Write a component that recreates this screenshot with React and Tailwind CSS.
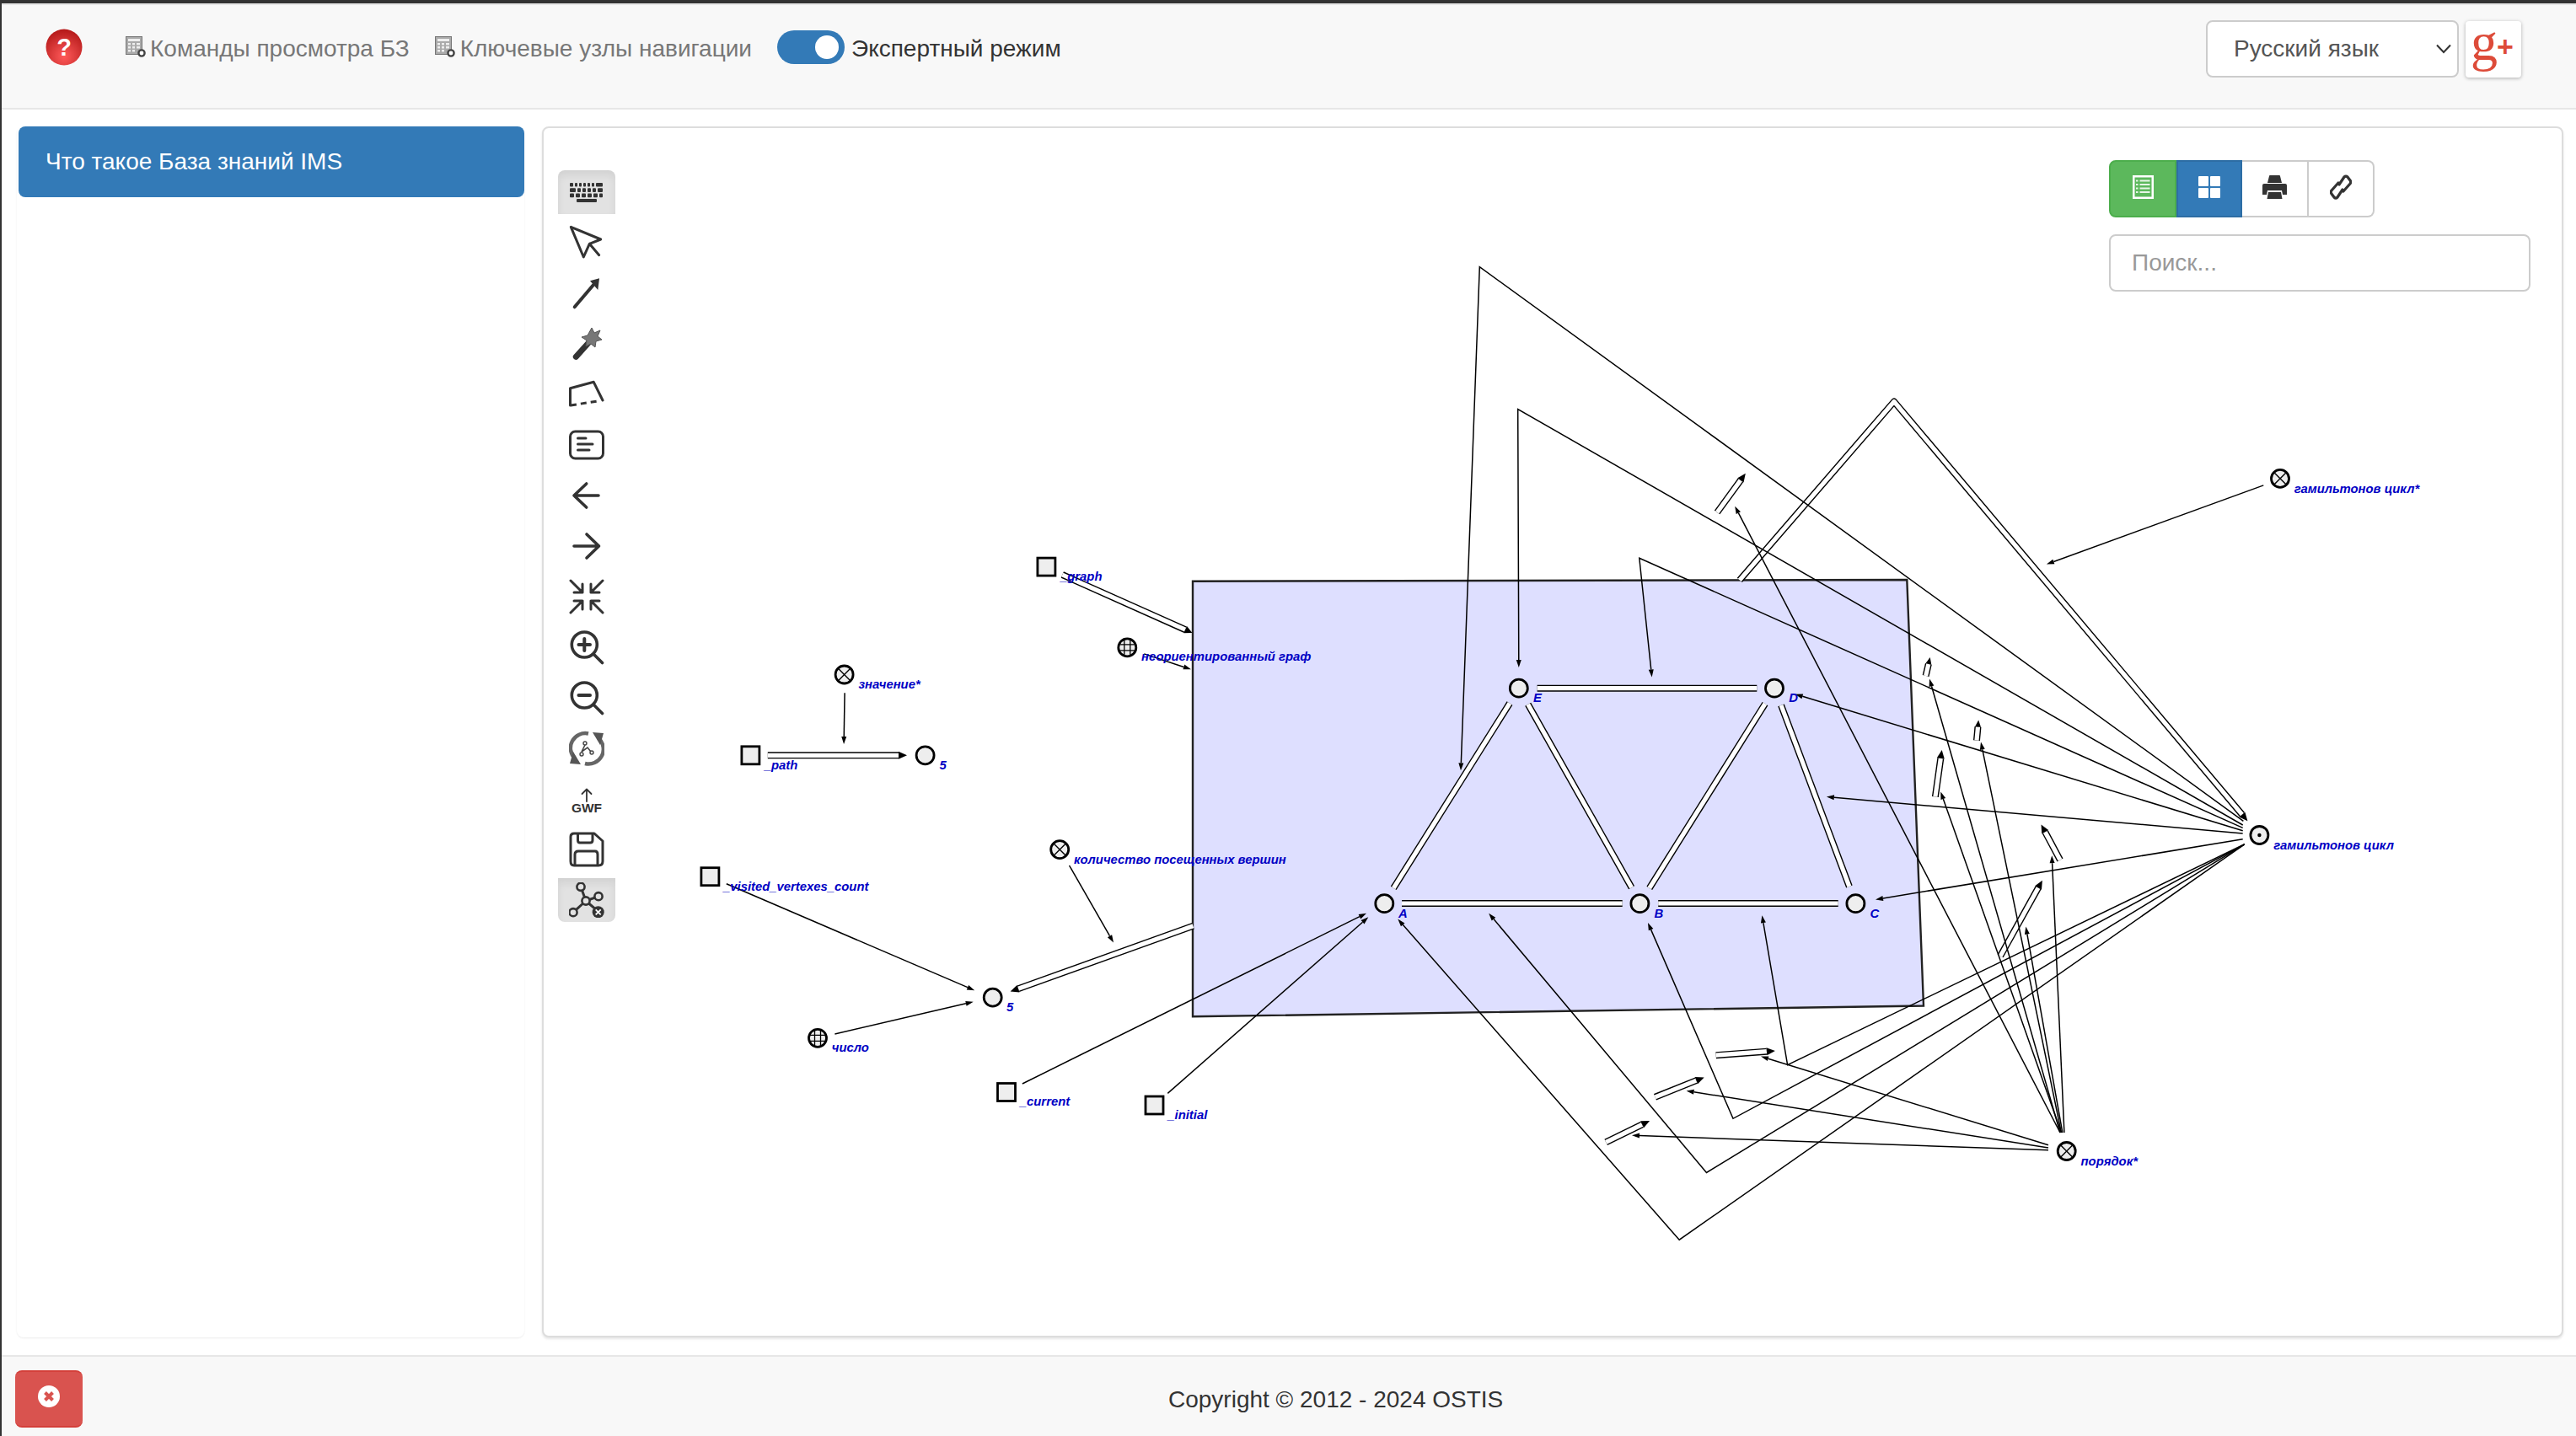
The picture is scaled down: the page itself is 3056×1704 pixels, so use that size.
import React from 'react';

const DARK = '#000';

function head(x1, y1, x2, y2, len, w) {
  const d = Math.hypot(x2 - x1, y2 - y1);
  const ux = (x2 - x1) / d, uy = (y2 - y1) / d;
  const bx = x2 - ux * len, by = y2 - uy * len;
  return {
    pts: `${x2},${y2} ${bx - uy * w / 2},${by + ux * w / 2} ${bx + uy * w / 2},${by - ux * w / 2}`,
    bx, by,
  };
}

function Thin({ p }) {
  const n = p.length;
  const h = head(p[n - 2][0], p[n - 2][1], p[n - 1][0], p[n - 1][1], 9, 6);
  const pts = p.slice(0, -1).map((q) => q.join(',')).join(' ') + ` ${h.bx},${h.by}`;
  return (
    <g>
      <polyline points={pts} fill="none" stroke={DARK} strokeWidth="1.5" />
      <polygon points={h.pts} fill={DARK} />
    </g>
  );
}

function Dbl({ p, arrow = true, len = 10, w = 9 }) {
  const n = p.length;
  let pts = p.map((q) => q.join(',')).join(' ');
  let h = null;
  if (arrow) {
    h = head(p[n - 2][0], p[n - 2][1], p[n - 1][0], p[n - 1][1], len, w);
    pts = p.slice(0, -1).map((q) => q.join(',')).join(' ') + ` ${h.bx},${h.by}`;
  }
  return (
    <g>
      <polyline points={pts} fill="none" stroke={DARK} strokeWidth="8" strokeLinejoin="round" />
      <polyline points={pts} fill="none" stroke="#fff" strokeWidth="5.2" strokeLinejoin="round" />
      {h && <polygon points={h.pts} fill={DARK} />}
    </g>
  );
}

function Square({ x, y }) {
  return <rect x={x - 10.5} y={y - 10.5} width="21" height="21" fill="#eee" stroke="#000" strokeWidth="2.8" />;
}
function Circle({ x, y }) {
  return <circle cx={x} cy={y} r="10.5" fill="#eee" stroke="#000" strokeWidth="2.8" />;
}
function Cross({ x, y }) {
  return (
    <g>
      <circle cx={x} cy={y} r="10.5" fill="#eee" stroke="#000" strokeWidth="2.8" />
      <path d={`M${x - 7.4} ${y - 7.4}L${x + 7.4} ${y + 7.4}M${x + 7.4} ${y - 7.4}L${x - 7.4} ${y + 7.4}`} stroke="#000" strokeWidth="1.4" />
    </g>
  );
}
function Globe({ x, y }) {
  return (
    <g>
      <circle cx={x} cy={y} r="10.5" fill="#eee" stroke="#000" strokeWidth="2.8" />
      <path d={`M${x - 3.5} ${y - 10}V${y + 10}M${x + 3.5} ${y - 10}V${y + 10}M${x - 10} ${y - 3.5}H${x + 10}M${x - 10} ${y + 3.5}H${x + 10}`} stroke="#000" strokeWidth="1.3" />
    </g>
  );
}
function Dot({ x, y }) {
  return (
    <g>
      <circle cx={x} cy={y} r="10.5" fill="#eee" stroke="#000" strokeWidth="2.8" />
      <circle cx={x} cy={y} r="2.2" fill="#000" />
    </g>
  );
}

const labels = [
  ['_graph', 1258, 688.6], ['неориентированный граф', 1354, 784.4], ['значение*', 1018.5, 816.5],
  ['_path', 906.7, 912.8], ['5', 1114.4, 912.8], ['_visited_vertexes_count', 858, 1056.7],
  ['количество посещенных вершин', 1274, 1025], ['5', 1194, 1199.7], ['число', 986.8, 1247.8],
  ['_current', 1209.8, 1312], ['_initial', 1385.3, 1328], ['E', 1819, 832.8], ['D', 2122.2, 832.8],
  ['A', 1658.9, 1089.4], ['B', 1962.6, 1089.4], ['C', 2218.6, 1089.4],
  ['гамильтонов цикл*', 2721.8, 585], ['гамильтонов цикл', 2697.2, 1007.8], ['порядок*', 2468.5, 1382.8],
];

function Graph() {
  return (
    <svg className="absolute left-0 top-0 w-[2394px] h-[1433px] pointer-events-none" viewBox="645 152 2394 1433">
      <polygon points="1415,689.8 2262.3,688 2282,1193.5 1415,1206.3" fill="#dedfff" stroke="#222" strokeWidth="2.4" />
      {/* edges inside the contour */}
      <Dbl arrow={false} p={[[1823.6, 816.7], [2084.3, 816.7]]} />
      <Dbl arrow={false} p={[[1663, 1072], [1924.7, 1072]]} />
      <Dbl arrow={false} p={[[1967.2, 1072], [2180.7, 1072]]} />
      <Dbl arrow={false} p={[[1653.2, 1053.8], [1791, 834.5]]} />
      <Dbl arrow={false} p={[[1812.7, 835.7], [1935.6, 1053.2]]} />
      <Dbl arrow={false} p={[[1956.8, 1053.8], [2094, 835]]} />
      <Dbl arrow={false} p={[[2113, 836.8], [2193.9, 1052]]} />
      {/* double arrows */}
      <Dbl p={[[1260.3, 682], [1414.4, 750.9]]} len={9} />
      <Dbl p={[[910.8, 896.3], [1076, 896.3]]} />
      <Dbl p={[[1415.4, 1098.7], [1198.6, 1176.6]]} />
      <Dbl p={[[2063.8, 688.4], [2247, 476.5], [2666.4, 974.3]]} />
      <Dbl p={[[2037.1, 608], [2070.8, 561.8]]} />
      <Dbl p={[[2284.6, 802], [2289.7, 780.1]]} len={8} w={7} />
      <Dbl p={[[2345, 878.6], [2347.2, 854.5]]} len={8} w={7} />
      <Dbl p={[[2295.9, 945.5], [2303.7, 890]]} />
      <Dbl p={[[2444, 1020.5], [2421.5, 978.4]]} />
      <Dbl p={[[2373.1, 1134.4], [2422.9, 1044.7]]} />
      <Dbl p={[[2035.7, 1252.2], [2105.9, 1246.9]]} />
      <Dbl p={[[1963.5, 1301.8], [2021.7, 1278.4]]} />
      <Dbl p={[[1905.2, 1355.4], [1957.1, 1329.9]]} />
      {/* thin arrows */}
      <Thin p={[[2685.3, 575.9], [2427.9, 669.6]]} />
      <Thin p={[[1357.3, 775.9], [1412.9, 794.3]]} />
      <Thin p={[[1002.1, 822.2], [1001.1, 883]]} />
      <Thin p={[[861.8, 1048.7], [1156.2, 1175.2]]} />
      <Thin p={[[990.4, 1227], [1154.7, 1188.8]]} />
      <Thin p={[[1268.5, 1027], [1321, 1118.5]]} />
      <Thin p={[[1212.9, 1286], [1621, 1083.7]]} />
      <Thin p={[[1385.3, 1297.4], [1623.3, 1088.3]]} />
      <Thin p={[[2661.4, 974.3], [1755.3, 316.7], [1733, 914.3]]} />
      <Thin p={[[2660.7, 979], [1800.7, 485.5], [1801.8, 792]]} />
      <Thin p={[[2660.7, 982.4], [1944.8, 662.3], [1959.7, 803.5]]} />
      <Thin p={[[2660.7, 985.7], [2129.7, 823.7]]} />
      <Thin p={[[2660.7, 989], [2166.9, 945.5]]} />
      <Thin p={[[2660.7, 995.8], [2225, 1067.4]]} />
      <Thin p={[[2662.8, 1001.8], [2120.6, 1263.6], [2090.4, 1086.2]]} />
      <Thin p={[[2662.8, 1001.8], [2056, 1327.3], [1955, 1094.9]]} />
      <Thin p={[[2662.8, 1001.8], [2024.5, 1391.5], [1766.2, 1083.7]]} />
      <Thin p={[[2662.8, 1001.8], [1992.2, 1471.2], [1658.3, 1090.6]]} />
      <Thin p={[[2444, 1344], [2058.2, 600.7]]} />
      <Thin p={[[2444, 1344], [2289, 805.6]]} />
      <Thin p={[[2445.4, 1344], [2350, 880.6]]} />
      <Thin p={[[2445.4, 1344], [2302.3, 939.5]]} />
      <Thin p={[[2448.9, 1344], [2434.2, 1015.2]]} />
      <Thin p={[[2446.8, 1344], [2403.3, 1099.6]]} />
      <Thin p={[[2430, 1358.7], [2089, 1253.6]]} />
      <Thin p={[[2430, 1362], [2000.6, 1294.4]]} />
      <Thin p={[[2430, 1364.8], [1936, 1347.3]]} />
      {/* nodes */}
      <Square x={1241.4} y={672.6} />
      <Square x={890.4} y={896.3} />
      <Square x={842.4} y={1040.2} />
      <Square x={1194} y={1296} />
      <Square x={1369.5} y={1311.5} />
      <Globe x={1337.3} y={768.4} />
      <Globe x={970} y={1231.8} />
      <Cross x={1001.6} y={800.5} />
      <Cross x={1257.2} y={1008.1} />
      <Cross x={2705} y={567.9} />
      <Cross x={2451.7} y={1366} />
      <Dot x={2680.4} y={991} />
      <Circle x={1097.6} y={896.3} />
      <Circle x={1177.7} y={1183.6} />
      <Circle x={1801.8} y={816.7} />
      <Circle x={2105} y={816.7} />
      <Circle x={1642.3} y={1072.2} />
      <Circle x={1945.4} y={1072.2} />
      <Circle x={2201.4} y={1072.2} />
      {labels.map(([t, x, y], i) => (
        <text key={i} x={x} y={y} fontFamily="Liberation Sans, sans-serif" fontSize="14.85" fontWeight="700" fontStyle="italic" fill="#0000c4">
          {t}
        </text>
      ))}
    </svg>
  );
}

const S = { fill: 'none', stroke: '#333', strokeWidth: 3, strokeLinecap: 'round', strokeLinejoin: 'round' };
function Ic({ children }) {
  return <svg width="42" height="42" viewBox="-1 -1 42 42">{children}</svg>;
}

const keyRows = [
  [[1, 4], [7, 3], [12, 3], [17, 3], [22, 3], [27, 3], [32, 8]],
  [[1, 7], [10, 4], [16, 4], [22, 4], [28, 4], [34, 6]],
  [[1, 5], [8, 5], [15, 5], [22, 5], [29, 5], [36, 4]],
];

const tools = [
  <Ic>
    {keyRows.map((r, i) => r.map(([x, w], j) => <rect key={`${i}${j}`} x={x - 1} y={9 + i * 6.3} width={w} height="4.6" rx="1" fill="#333" />))}
    <rect x="8" y="28" width="24" height="4" rx="1" fill="#333" />
  </Ic>,
  <Ic><path {...S} d="M1.3 1.3L36.7 16L23.3 21.3L16.3 37ZM23.3 21.3L34.7 34.7" /></Ic>,
  <Ic>
    <path {...S} strokeWidth="4" d="M5.7 36.3L28 10" />
    <polygon points="35,2.3 24,5.3 33.3,16" fill="#333" />
  </Ic>,
  <Ic>
    <path d="M7.3 35.3L22 19" stroke="#333" strokeWidth="7" strokeLinecap="round" />
    <polygon points="26,1 29,7 36,4 33,11 38,15 31,17 30,24 25,20 19,23 20,16 14,12 21,10 " fill="#777" stroke="#555" strokeWidth="1" />
  </Ic>,
  <Ic>
    <path {...S} d="M39 27L28.3 5.3L0.5 12.7V33" />
    <path {...S} strokeLinecap="butt" strokeDasharray="7 5" d="M1 33L36 27.5" />
  </Ic>,
  <Ic>
    <rect {...S} x="0.5" y="4" width="39" height="32" rx="6" />
    <path {...S} d="M9.5 12H19M9.5 19H27M9.5 26H23" />
  </Ic>,
  <Ic><path {...S} strokeWidth="3.6" d="M5 20H34M19.7 6L5 20L19.7 34" /></Ic>,
  <Ic><path {...S} strokeWidth="3.6" d="M5 20H34.5M20 6L34.5 20L20 34" /></Ic>,
  <Ic>
    <path {...S} d="M1 1L15 15M5 15H15V5M39 1L25 15M35 15H25V5M1 39L15 25M5 25H15V35M39 39L25 25M35 25H25V35" />
  </Ic>,
  <Ic>
    <circle {...S} strokeWidth="3.6" cx="17.3" cy="17" r="15" />
    <path {...S} strokeWidth="3.6" d="M29 29L38.5 38.5" />
    <path {...S} strokeWidth="4" d="M10.5 17H24M17.3 10V24" />
  </Ic>,
  <Ic>
    <circle {...S} strokeWidth="3.6" cx="17.3" cy="17" r="15" />
    <path {...S} strokeWidth="3.6" d="M29 29L38.5 38.5" />
    <path {...S} strokeWidth="4" d="M10.5 17H24" />
  </Ic>,
  <Ic>
    <path d="M22 2.5A17.5 17.5 0 0 0 6 32" fill="none" stroke="#666" strokeWidth="4.5" />
    <polygon points="0,38 13,39 4,24" fill="#555" />
    <path d="M18 38A17.5 17.5 0 0 0 34 8" fill="none" stroke="#666" strokeWidth="4.5" />
    <polygon points="40,2 27,1 36,16" fill="#555" />
    <path d="M18 16L14 24L21 19L25 24" fill="none" stroke="#444" strokeWidth="1.6" />
    <circle cx="18" cy="14" r="2" fill="#fff" stroke="#444" strokeWidth="1.4" />
    <circle cx="14" cy="27" r="2" fill="#fff" stroke="#444" strokeWidth="1.4" />
    <circle cx="26" cy="25" r="2" fill="#fff" stroke="#444" strokeWidth="1.4" />
  </Ic>,
  <div className="flex flex-col items-center mt-[5px] font-['Liberation_Sans',sans-serif] font-bold text-[15.5px] leading-[14px] text-[#333]">
    <svg width="14" height="17" viewBox="0 0 14 17"><path {...S} strokeWidth="1.8" d="M7 16V1.5M1.5 7L7 1.5L12.5 7" /></svg>
    <span>GWF</span>
  </div>,
  <Ic>
    <path {...S} d="M5 1H29L39 10V34Q39 39 34 39H5Q1 39 1 34V5Q1 1 5 1Z" />
    <path {...S} d="M9.5 1.5V9Q9.5 12 12 12H24Q27 12 27 9V1.5M6 38V26Q6 22 10 22H30Q33 22 33 26V38" />
  </Ic>,
  <Ic>
    <path d="M19 21L13 4.3M19 21L34 15.7M19 21L4 34.7M19 21L34.7 34.3" stroke="#333" strokeWidth="3" />
    <circle cx="13" cy="4.3" r="4.6" fill="#e2e2e2" stroke="#333" strokeWidth="2.6" />
    <circle cx="34" cy="15.7" r="4.6" fill="#e2e2e2" stroke="#333" strokeWidth="2.6" />
    <circle cx="4" cy="34.7" r="4.6" fill="#e2e2e2" stroke="#333" strokeWidth="2.6" />
    <circle cx="19" cy="21" r="4.6" fill="#e2e2e2" stroke="#333" strokeWidth="2.6" />
    <circle cx="33.7" cy="34.3" r="7" fill="#333" />
    <path d="M30.7 31.3L36.7 37.3M36.7 31.3L30.7 37.3" stroke="#fff" strokeWidth="1.8" />
  </Ic>,
];

function NavIcon() {
  return (
    <svg width="24" height="25" viewBox="0 0 24 25" className="mr-[5px] mb-[6px]">
      <rect x="0.5" y="0.5" width="19" height="21" fill="#aaa" stroke="#777" />
      <rect x="3" y="3" width="14" height="3" fill="#eee" />
      <path d="M3 8h3v2.5H3zM8 8h3v2.5H8zM13 8h4v2.5H13zM3 12h3v2.5H3zM8 12h3v2.5H8zM13 12h4v2.5H13zM3 16h3v2.5H3zM8 16h3v2.5H8z" fill="#eee" />
      <circle cx="19" cy="20" r="3.6" fill="#fff" stroke="#444" strokeWidth="2.4" />
    </svg>
  );
}

export default function App() {
  return (
    <div className="w-[3056px] h-[1704px] flex flex-col bg-white border-l-2 border-[#333] font-['Liberation_Sans',sans-serif] text-[28px] text-[#333] overflow-hidden">
      <div className="h-[4px] -ml-[2px] bg-[#333] shrink-0" />
      {/* navbar */}
      <div className="h-[126px] shrink-0 bg-[#f8f8f8] border-t-2 border-b-2 border-[#e7e7e7] flex justify-between items-start">
        <div className="flex items-center h-[68px] mt-[18px]">
          <svg width="44" height="44" viewBox="0 0 44 44" className="ml-[52px] mb-[4px]">
            <defs>
              <radialGradient id="rb" cx="50%" cy="75%" r="70%">
                <stop offset="0" stopColor="#ff5a5a" />
                <stop offset="1" stopColor="#b81c1c" />
              </radialGradient>
            </defs>
            <circle cx="22" cy="22" r="21.5" fill="url(#rb)" />
            <text x="22" y="32" textAnchor="middle" fontFamily="Liberation Sans, sans-serif" fontWeight="700" fontSize="29" fill="#fff">?</text>
          </svg>
          <div className="ml-[51px] flex items-center text-[#777]">
            <NavIcon />
            <span>Команды просмотра БЗ</span>
          </div>
          <div className="ml-[30px] flex items-center text-[#777]">
            <NavIcon />
            <span className="ml-[1px]">Ключевые узлы навигации</span>
          </div>
          <div className="ml-[30px] mb-[4px] w-[80px] h-[40px] rounded-[20px] bg-[#337ab7] relative">
            <div className="absolute right-[7px] top-[6px] w-[28px] h-[28px] rounded-full bg-white" />
          </div>
          <span className="ml-[8px]">Экспертный режим</span>
        </div>
        <div className="flex items-center mt-[18px] mr-[65px] gap-[8px]">
          <div className="relative w-[300px] h-[68px]">
            <select className="appearance-none w-full h-full bg-white border-2 border-[#ccc] rounded-[8px] pl-[31px] pr-[8px] text-[#555]" defaultValue="ru">
              <option value="ru">Русский язык</option>
            </select>
            <svg width="18" height="12" viewBox="0 0 18 12" className="absolute right-[9px] top-[28px]">
              <path d="M1 1.5L9 10L17 1.5" fill="none" stroke="#333" strokeWidth="2" />
            </svg>
          </div>
          <div className="w-[66px] h-[67px] bg-white rounded-[4px] shadow-[0_1px_4px_rgba(0,0,0,0.3)] flex items-center justify-center text-[#dd4b39] font-['Liberation_Serif',serif]">
            <span className="text-[64px] leading-[64px] -mt-[17px] -ml-[3px]">g</span>
            <span className="text-[34px] leading-[34px] font-bold font-['Liberation_Sans',sans-serif] -mt-[6px] -ml-[1px]">+</span>
          </div>
        </div>
      </div>
      {/* main */}
      <div className="flex-1 flex pt-[20px] pb-[21px] pl-[18px]">
        <div className="w-[602px] rounded-[8px] shadow-[0_1px_2px_rgba(0,0,0,0.08)]">
          <div className="ml-[2px] h-[84px] w-[600px] bg-[#337ab7] rounded-[8px] text-white flex items-center pl-[32px]">Что такое База знаний IMS</div>
        </div>
        <div className="ml-[21px] w-[2398px] relative border-2 border-[#ddd] rounded-[8px] bg-white shadow-[0_2px_3px_rgba(0,0,0,0.1)] flex justify-between items-start pl-[17px] pr-[37px]">
          <Graph />
          <div className="relative flex flex-col gap-[8px] mt-[50px]">
            {tools.map((t, i) => {
              const active = i === 0 || i === tools.length - 1;
              return (
                <div
                  key={i}
                  className={
                    'w-[68px] h-[52px] flex items-center justify-center ' +
                    (active ? 'bg-[#e2e2e2] shadow-[inset_0_6px_10px_rgba(0,0,0,0.07)] ' : '') +
                    (i === 0 ? 'rounded-t-[8px]' : '') +
                    (i === tools.length - 1 ? 'rounded-b-[8px]' : '')
                  }
                >
                  {t}
                </div>
              );
            })}
          </div>
          <div className="relative mt-[38px] w-[500px] flex flex-col gap-[20px]">
            <div className="flex h-[68px] w-[315px]">
              <div className="w-[80px] bg-[#5cb85c] border-2 border-[#4cae4c] rounded-l-[8px] flex items-center justify-center pb-[4px]">
                <svg width="25" height="28" viewBox="0 0 25 28">
                  <rect width="25" height="28" fill="#fff" />
                  <rect x="2.5" y="2.5" width="20" height="23" fill="#5cb85c" />
                  <path d="M8.5 6.5H20.5M8.5 11H20.5M8.5 15.5H20.5M8.5 20H20.5M4 6.5H6.5M4 11H6.5M4 15.5H6.5M4 20H6.5" stroke="#e6f5e6" strokeWidth="2.2" />
                </svg>
              </div>
              <div className="w-[78px] bg-[#337ab7] border-2 border-[#2e6da4] flex items-center justify-center pb-[4px]">
                <div className="grid grid-cols-2 gap-[2px]">
                  <div className="w-[12px] h-[12px] rounded-[1px] bg-white" />
                  <div className="w-[12px] h-[12px] rounded-[1px] bg-white" />
                  <div className="w-[12px] h-[12px] rounded-[1px] bg-white" />
                  <div className="w-[12px] h-[12px] rounded-[1px] bg-white" />
                </div>
              </div>
              <div className="w-[79px] bg-white border-2 border-l-0 border-[#ccc] flex items-center justify-center pb-[4px]">
                <svg width="29" height="28" viewBox="0 0 29 28">
                  <path d="M8 1Q8 0 9 0H20Q21 0 21 1L23 9H6Z M2 10H27Q29 10 29 12V23H24L23 18H6L5 23H0V12Q0 10 2 10Z M7 20H22L23.5 28H5.5Z" fill="#333" />
                </svg>
              </div>
              <div className="w-[78px] bg-white border-2 border-l-0 border-[#ccc] rounded-r-[8px] flex items-center justify-center pb-[4px]">
                <svg width="26" height="30" viewBox="0 0 26 30">
                  <path d="M11 12L17 3Q19 1 21 3L24 7Q25.5 9 24 11L16 20M15 18L9 27Q7 29 5 27L2 23Q0.5 21 2 19L10 10" fill="none" stroke="#333" strokeWidth="3.2" strokeLinecap="round" strokeLinejoin="round" />
                </svg>
              </div>
            </div>
            <div className="h-[68px] border-2 border-[#ccc] rounded-[8px] bg-white flex items-center pl-[25px] text-[#999]">Поиск...</div>
          </div>
        </div>
      </div>
      {/* footer */}
      <div className="h-[96px] shrink-0 bg-[#f8f8f8] border-t-2 border-[#e7e7e7] flex items-start pt-[16px]">
        <div className="ml-[16px] w-[80px] h-[68px] bg-[#d9534f] border-y-2 border-[#d43f3a] rounded-[8px] flex items-center justify-center pb-[6px]">
          <svg width="26" height="26" viewBox="0 0 26 26">
            <circle cx="13" cy="13" r="13" fill="#fff" />
            <path d="M8.5 8.5L17.5 17.5M17.5 8.5L8.5 17.5" stroke="#d9534f" strokeWidth="4" />
          </svg>
        </div>
        <span className="ml-[1288px] mt-[14px]">Copyright © 2012 - 2024 OSTIS</span>
      </div>
    </div>
  );
}
